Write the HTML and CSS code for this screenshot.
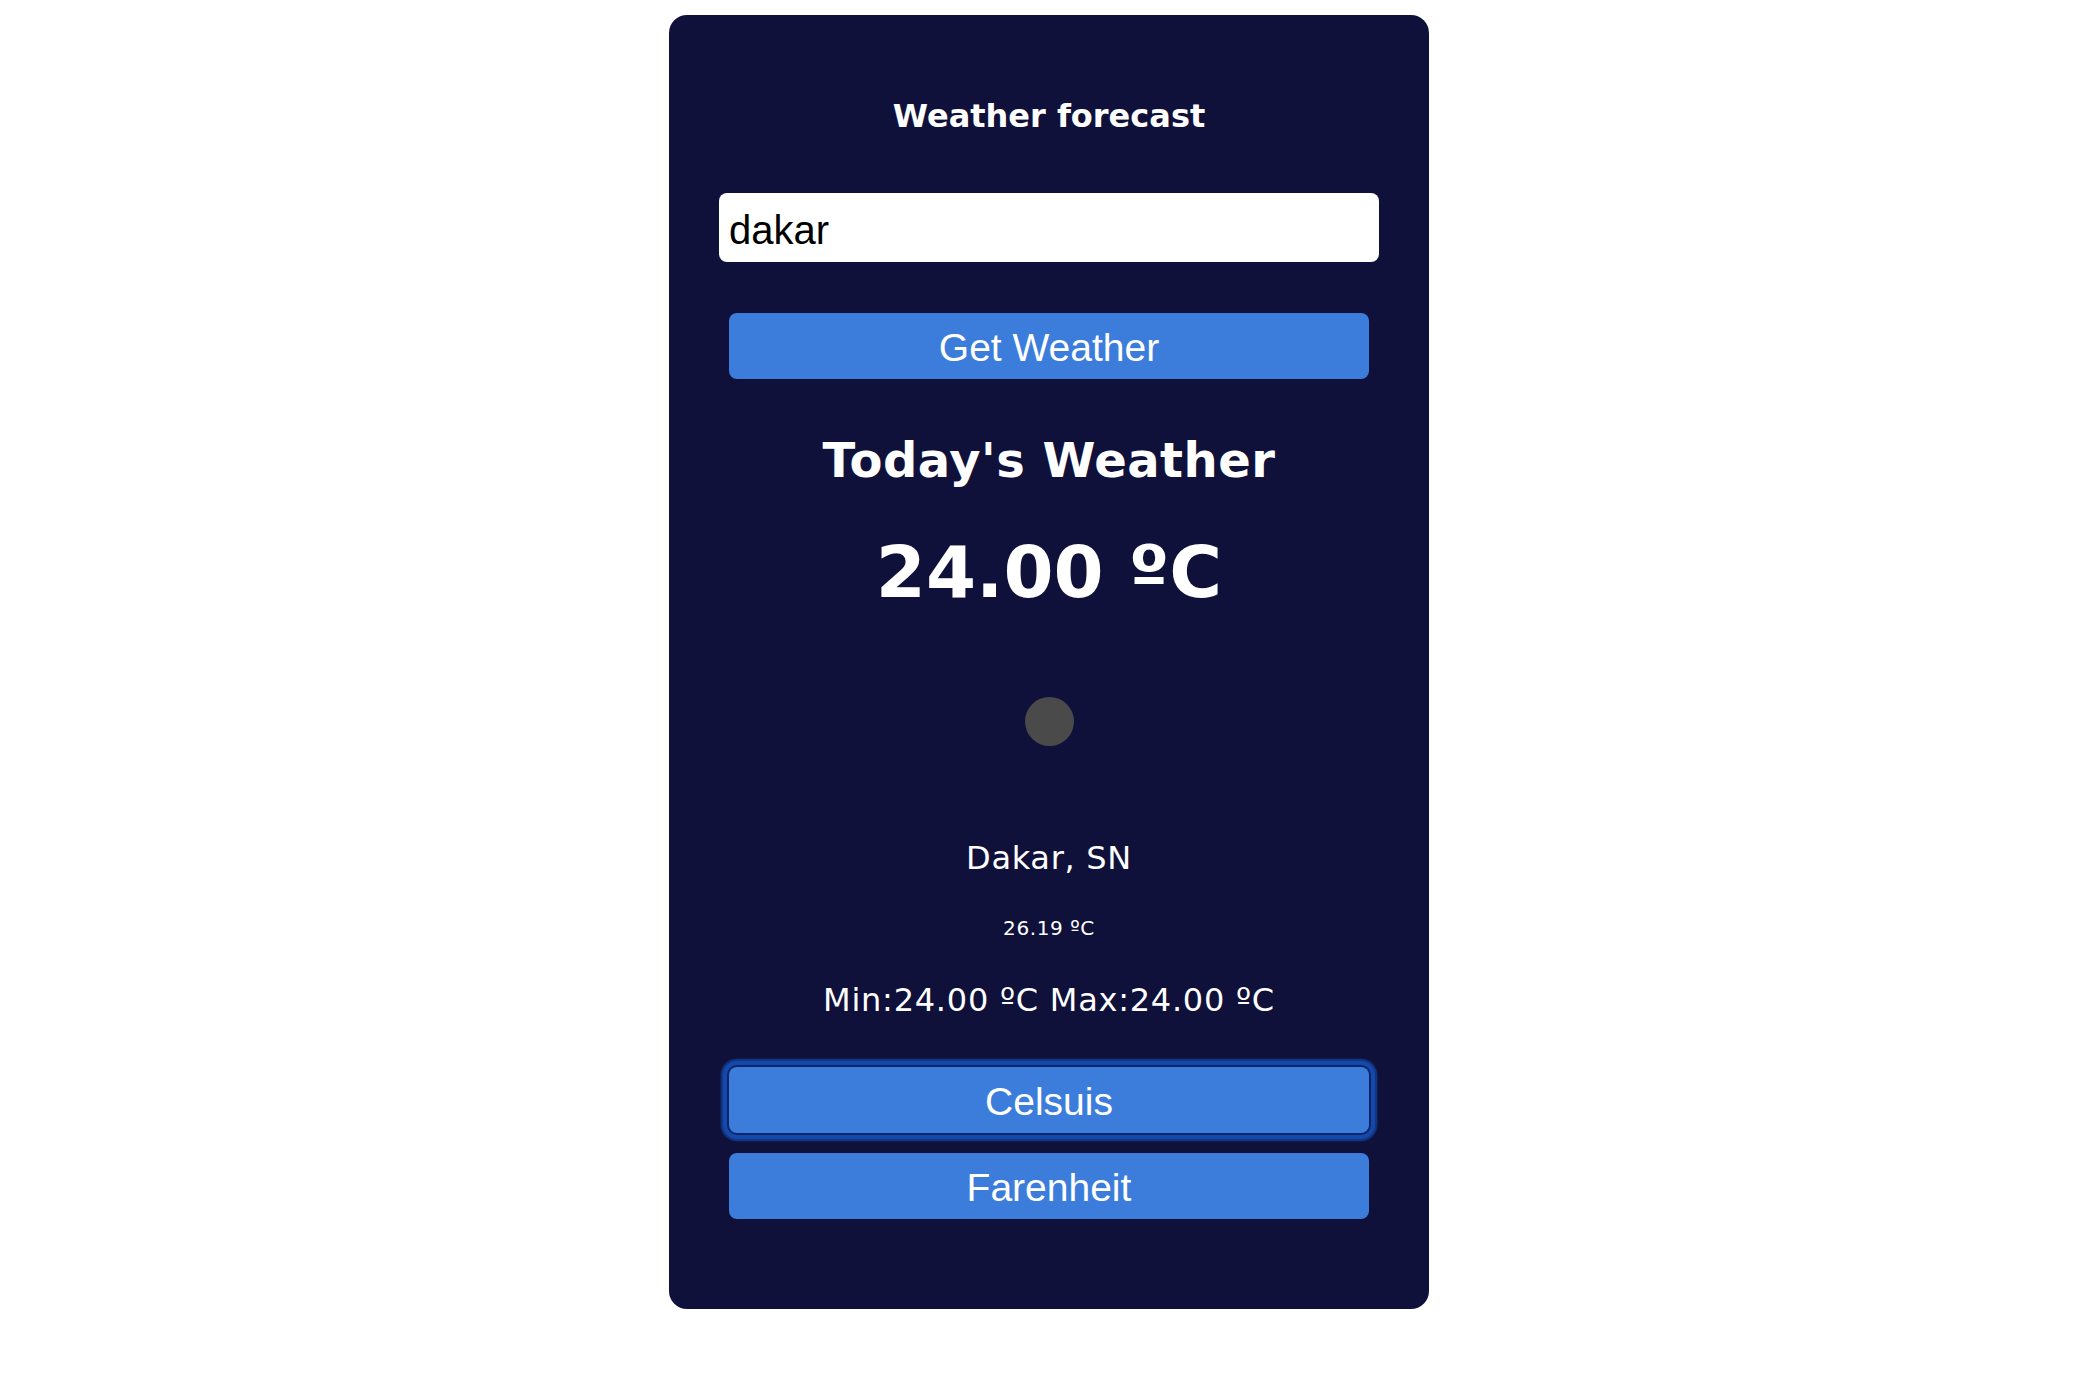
FILE: index.html
```html
<!DOCTYPE html>
<html lang="en">
<head>
<meta charset="utf-8">
<title>Weather forecast</title>
<link rel="stylesheet" href="styles.css">
</head>
<body>
<main class="card">
  <h3 class="title">Weather forecast</h3>
  <input class="city" type="text" value="dakar">
  <button class="btn btn-get">Get Weather</button>
  <h2 class="today">Today's Weather</h2>
  <div class="temp">24.00 ºC</div>
  <div class="icon"></div>
  <div class="place">Dakar, SN</div>
  <div class="feels">26.19 ºC</div>
  <div class="minmax">Min:24.00 ºC Max:24.00 ºC</div>
  <button class="btn btn-c focused">Celsuis</button>
  <button class="btn btn-f">Farenheit</button>
</main>
</body>
</html>
```

FILE: styles.css
```css
html, body {
  margin: 0;
  padding: 0;
  background: #ffffff;
}
body {
  padding: 15px 0 0 14px;
  font-family: "DejaVu Sans", Verdana, sans-serif;
}
.card {
  box-sizing: border-box;
  width: 760px;
  height: 1294px;
  margin: 0 auto;
  background: #0f113a;
  border-radius: 18px;
  padding: 81px 50px 0;
  display: flex;
  flex-direction: column;
  align-items: stretch;
  color: #ffffff;
  text-align: center;
}
.title {
  margin: 0;
  font-size: 32px;
  line-height: 40px;
  font-weight: bold;
}
.city {
  box-sizing: border-box;
  margin: 57px 0 0;
  height: 69px;
  width: 100%;
  border: none;
  border-radius: 8px;
  background: #ffffff;
  color: #000000;
  padding: 5px 10px 0;
  font-family: "Liberation Sans", Arial, sans-serif;
  font-size: 40px;
  outline: none;
}
.btn {
  box-sizing: border-box;
  display: flex;
  align-items: center;
  justify-content: center;
  height: 66px;
  margin: 0 10px;
  border: none;
  border-radius: 8px;
  background: #3c7ddc;
  color: #ffffff;
  font-family: "Liberation Sans", Arial, sans-serif;
  font-size: 39px;
  padding: 3px 0 0;
}
.btn-get {
  margin-top: 51px;
}
.today {
  margin: 52px 0 0;
  font-size: 48px;
  line-height: 58px;
  font-weight: bold;
  letter-spacing: 0.5px;
}
.temp {
  margin-top: 40px;
  font-size: 72px;
  line-height: 86px;
  font-weight: bold;
}
.icon {
  align-self: center;
  width: 49px;
  height: 49px;
  margin-top: 82px;
  border-radius: 50%;
  background: #4a4a4a;
}
.place {
  margin-top: 92px;
  font-size: 32px;
  line-height: 40px;
  letter-spacing: 0.7px;
}
.feels {
  margin-top: 38px;
  font-size: 20px;
  line-height: 24px;
  letter-spacing: 0.6px;
}
.minmax {
  margin-top: 40px;
  font-size: 32px;
  line-height: 40px;
  letter-spacing: 0.75px;
}
.btn-c {
  margin-top: 47px;
}
.focused {
  box-shadow: 0 0 0 2px #0c2567, 0 0 0 6px #1448ad, 0 0 0 8px #12357f, 0 0 0 9px #111c52;
}
.btn-f {
  margin-top: 20px;
}
```
